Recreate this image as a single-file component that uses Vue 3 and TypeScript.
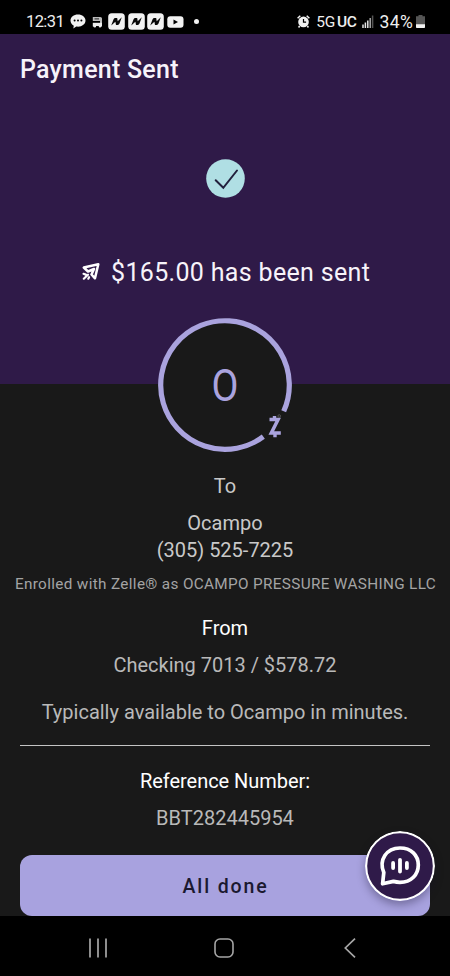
<script setup lang="ts">
interface Line {
  text: string
  kind: string
}

const amount = '$165.00 has been sent'
const recipient: Line[] = [
  { text: 'To', kind: 'to' },
  { text: 'Ocampo', kind: 'name' },
  { text: '(305) 525-7225', kind: 'phone' },
  { text: 'Enrolled with Zelle® as OCAMPO PRESSURE WASHING LLC', kind: 'enrolled' },
  { text: 'From', kind: 'from' },
  { text: 'Checking 7013 / $578.72', kind: 'account' },
  { text: 'Typically available to Ocampo in minutes.', kind: 'timing' },
]
const appBadges = [1, 2, 3]
</script>

<template>
  <div class="screen">
    <header class="status">
      <span class="clock">12:31</span>
      <svg class="i-chat" width="16" height="15" viewBox="0 0 16 15">
        <path d="M8 .5C3.700.5.5 3 .5 6.600c0 2.200 1.300 4 3.300 5.100L3.300 14.500l3-1.900c.5.100 1.100.1 1.700.1 4.300 0 7.500-2.600 7.500-6.100S12.300.5 8 .5z" fill="#f2f2f2" />
        <circle cx="4.600" cy="6.500" r="1" /><circle cx="8" cy="6.500" r="1" /><circle cx="11.400" cy="6.500" r="1" />
      </svg>
      <svg class="i-bus" width="11" height="12" viewBox="0 0 11 12">
        <path d="M.8 1h7.400c1.200 0 1.800.7 1.800 1.800V9H8V5H.8z" fill="#bbb" />
        <path d="M2.500 2.900h4.500" stroke="#222" stroke-width="1" />
        <path d="M.8 6.800H10v3.600H.8z" fill="#eee" />
        <circle cx="2.800" cy="10.300" r="1.300" fill="#eee" /><circle cx="8" cy="10.300" r="1.300" fill="#eee" />
        <path d="M4 10.800h2.800" stroke="#000" stroke-width="1.400" />
      </svg>
      <svg v-for="badge in appBadges" :key="badge" class="i-app" width="17" height="17" viewBox="0 0 17 17">
        <rect x=".2" y=".2" width="16.600" height="16.600" rx="3.500" fill="#f2f2f2" />
        <path d="M3.200 12.600L5.600 6.300Q6.100 5 7.400 5H9.200L9.700 8.200 13.800 4.300 11.500 10.500Q11 11.900 9.700 11.900H8L7.400 8.800z" fill="#080808" />
      </svg>
      <svg class="i-video" width="17" height="12" viewBox="0 0 17 12">
        <rect x=".3" y=".3" width="16.200" height="11.400" rx="3" fill="#f2f2f2" />
        <path d="M6.500 3.500v5L11 6z" />
      </svg>
      <i class="more"></i>
      <span class="grow"></span>
      <svg class="i-alarm" width="13" height="13" viewBox="0 0 13 13">
        <circle cx="6.500" cy="6.900" r="5.300" fill="#f2f2f2" />
        <path d="M.6 3.300L3.300.8M12.400 3.300L9.700.8M2.600 11l-1 1.500M10.400 11l1 1.500" stroke="#f2f2f2" stroke-width="1.500" />
        <path d="M6.500 4v3.200h2.600" fill="none" stroke="#000" stroke-width="1.200" />
      </svg>
      <span class="network">5G<b>UC</b></span>
      <svg class="i-signal" width="12" height="13" viewBox="0 0 12 13">
        <path d="M1 9.500V13M3.400 7.500V13M5.800 5.500V13" stroke="#e4e4e4" stroke-width="1.500" />
        <path d="M8.200 3V13" stroke="#aaa" stroke-width="1.500" /><path d="M10.600.5V13" stroke="#555" stroke-width="1.500" />
      </svg>
      <span class="battery">34%</span>
      <svg class="i-battery" width="9" height="13" viewBox="0 0 9 13">
        <path d="M2.500 0h4v1.200H9V13H0V1.200h2.500z" fill="#555" />
        <path d="M0 9.300h9V12q0 1-1 1H1q-1 0-1-1z" fill="#f2f2f2" />
      </svg>
    </header>

    <section class="hero">
      <h1>Payment Sent</h1>
      <svg class="check" width="39" height="39" viewBox="0 0 39 39">
        <circle cx="19.500" cy="19.500" r="19.300" fill="#b0dfe4" />
        <path d="M9.700 21.200l7.600 7.600L31 11.500" fill="none" stroke="#22203d" stroke-width="2" stroke-linecap="round" />
      </svg>
      <div class="sent">
        <svg width="18" height="18" viewBox="0 0 18 18">
          <path d="M1.800 4.500L16.300 1.300 13 15.300 9.500 11.500 12 6 6 8.500z" fill="none" stroke="#fff" stroke-width="2.500" stroke-linejoin="round" />
          <path d="M1.500 10.800l2.300.8M1.800 15.700l4.200-4M6.300 15.700l.8-1.500" stroke="#fff" stroke-width="2.200" stroke-linecap="round" />
        </svg>
        <span>{{ amount }}</span>
      </div>
    </section>

    <main class="details">
      <div class="avatar">
        <svg width="134" height="134" viewBox="0 0 134 134">
          <circle cx="67" cy="67" r="66.500" fill="#191919" />
          <path d="M125.700 93.300A64.300 64.300 0 1 0 105.300 118.700" fill="none" stroke="#aaa3de" stroke-width="5.200" />
          <path d="M111.500 101.500h8.600l-6.800 13.500h9.500" fill="none" stroke="#aaa3de" stroke-width="3.500" />
          <path d="M116.500 98v4M117 114.500v4.700" stroke="#aaa3de" stroke-width="3.400" />
          <circle cx="121.200" cy="98" r="1.300" fill="none" stroke="#666" stroke-width=".7" />
        </svg>
        <span class="initial">O</span>
      </div>
      <p v-for="line in recipient" :key="line.kind" :class="['line', line.kind]"><span>{{ line.text }}</span></p>
      <hr />
      <p class="line ref"><span>Reference Number:</span></p>
      <p class="line refno"><span>BBT282445954</span></p>
      <div class="action">
        <button type="button">All done</button>
        <svg class="assistant" width="70" height="70" viewBox="0 0 70 70">
          <circle cx="35" cy="35" r="33.900" fill="#2f1a49" stroke="#fff" stroke-width="2.200" />
          <path d="M17.600 52.800l1.200-11.300C13.500 29 21.500 17 35 17c11.300 0 18.300 7.400 18.300 17S46.300 51.300 35 51.300c-2.500 0-4.800-.4-6.600-.9z" fill="none" stroke="#fff" stroke-width="3.700" stroke-linejoin="round" />
          <path d="M28.100 32v5M35 28.800v11.700M41.900 32v5" stroke="#fff" stroke-width="3.800" stroke-linecap="round" />
        </svg>
      </div>
    </main>

    <nav class="system">
      <svg width="20" height="20" viewBox="0 0 20 20"><path d="M2 .5v19M10 .5v19M18 .5v19" stroke="#a6a6a6" stroke-width="1.700" /></svg>
      <svg class="home" width="20" height="20" viewBox="0 0 20 20"><rect x="1" y="1" width="18" height="18" rx="5" fill="none" stroke="#a6a6a6" stroke-width="1.600" /></svg>
      <svg width="12" height="20" viewBox="0 0 12 20"><path d="M11 .7L1.300 10 11 19.300" fill="none" stroke="#a6a6a6" stroke-width="1.700" /></svg>
    </nav>
  </div>
</template>

<style>
body {
  margin: 0;
  background: #000;
}
</style>

<style scoped>
.screen {
  width: 450px;
  height: 976px;
  display: flex;
  flex-direction: column;
  overflow: hidden;
  font-family: Roboto, "Liberation Sans", sans-serif;
  background: #191919;
  color: #c9c9c9;
}
svg { display: block; flex: none; }
.status {
  box-sizing: border-box;
  height: 34px;
  padding: 9px 25px 0 26px;
  display: flex;
  align-items: center;
  background: #000;
  color: #eee;
  font-size: 16.5px;
  line-height: 24px;
  white-space: nowrap;
}
.clock { width: 44px; letter-spacing: -.6px; }
.i-bus { margin: 1px 5px 0 6px; }
.i-app { margin-right: 2.700px; }
.more { width: 5px; height: 5px; margin-left: 10px; border-radius: 50%; background: #f2f2f2; }
.grow { flex: 1; }
.network { margin: 0 5px 0 6px; font-size: 15.5px; letter-spacing: -.3px; }
.network b { margin-left: 2px; font-weight: 500; }
.battery { margin: 0 3px 0 6px; font-size: 17.500px; letter-spacing: .3px; }
.hero {
  height: 350px;
  display: flex;
  flex-direction: column;
  align-items: center;
  background: #2f1a48;
  color: #f7f3fa;
}
h1 {
  align-self: stretch;
  margin: 20px 0 0 20px;
  font-size: 25px;
  line-height: 32px;
  font-weight: 500;
  letter-spacing: .25px;
}
.check { margin-top: 73px; }
.sent {
  display: flex;
  align-items: center;
  align-self: stretch;
  gap: 11px;
  margin: 58px 0 0 82px;
  font-size: 25px;
  line-height: 32px;
  white-space: nowrap;
  letter-spacing: .33px;
}
.sent svg { margin-top: -2px; }
.sent span { padding-top: 1px; }
.details {
  flex: 1;
  display: flex;
  flex-direction: column;
  align-items: center;
}
.avatar {
  display: grid;
  place-items: center;
  width: 134px;
  height: 134px;
  margin-top: -66px;
}
.avatar > * { grid-area: 1 / 1; }
.initial { padding-top: 4px; font-size: 43.5px; line-height: 50px; color: #aaa3de; transform: scaleX(.9); }
.line { margin: 0; font-size: 20px; line-height: 27px; white-space: nowrap; }
.to { margin-top: 21px; }
.name { margin-top: 10px; }
.enrolled { margin-top: 7px; padding-left: 1px; font-size: 15.300px; color: #a4a4a4; letter-spacing: .34px; }
.from { margin-top: 17px; color: #fff; }
.account { margin-top: 10px; }
.timing { margin-top: 20px; }
.account, .timing, .refno { color: #b9b9b9; }
hr { width: 410px; height: 1.500px; margin: 18.500px 0 0; border: 0; background: #c4c4c4; }
.ref { margin-top: 22px; color: #fff; letter-spacing: -.05px; }
.refno { margin-top: 10px; }
.action { display: grid; width: 410px; margin-top: 22.500px; }
button {
  grid-area: 1 / 1;
  height: 61px;
  padding: 2px 0 0 1px;
  border: 0;
  border-radius: 12px;
  background: #a8a2df;
  color: #1b1930;
  font: 500 19.500px Roboto, "Liberation Sans", sans-serif;
  letter-spacing: 1.850px;
}
.assistant {
  grid-area: 1 / 1;
  justify-self: end;
  margin: -24px -5px 0 0;
  border-radius: 50%;
  box-shadow: 0 4px 9px rgba(20, 15, 40, .35);
}
.system {
  height: 60px;
  display: flex;
  align-items: center;
  justify-content: space-between;
  box-sizing: border-box;
  padding: 4px 94px 0 87.500px;
  background: #000;
}
.home { margin-right: 4px; }
</style>
